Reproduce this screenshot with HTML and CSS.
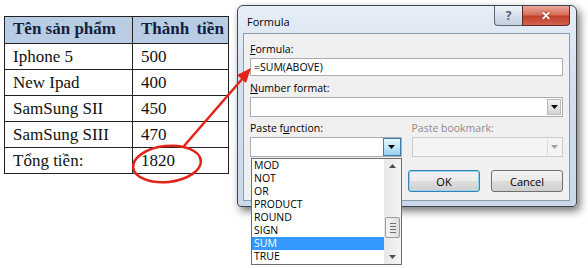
FILE: index.html
```html
<!DOCTYPE html>
<html lang="vi">
<head>
  <meta charset="UTF-8">
  <title>Formula</title>
  <link rel="stylesheet" href="styles.css">
</head>
<body>
  <div class="scene">
    <table class="price-table">
      <tr class="head">
        <th class="col-name">Tên sản phẩm</th>
        <th class="col-total">Thành tiền</th>
      </tr>
      <tr><td>Iphone 5</td><td>500</td></tr>
      <tr><td>New Ipad</td><td>400</td></tr>
      <tr><td>SamSung SII</td><td>450</td></tr>
      <tr><td>SamSung SIII</td><td>470</td></tr>
      <tr><td>Tổng tiền:</td><td>1820</td></tr>
    </table>

    <div class="dialog">
      <div class="titlebar">
        <span class="title">Formula</span>
        <div class="caption-btns">
          <span class="cap help">?</span>
          <span class="cap close">✕</span>
        </div>
      </div>

      <div class="client">
        <div class="label"><u>F</u>ormula:</div>
        <div class="textbox">=SUM(ABOVE)</div>

        <div class="label gap"><u>N</u>umber format:</div>
        <div class="combo">
          <span class="combo-btn">
            <svg width="7" height="4" viewBox="0 0 7 4"><polygon points="0,0 7,0 3.5,4" fill="#000"/></svg>
          </span>
        </div>

        <div class="paste-row">
          <div class="paste-col">
            <div class="label">Paste f<u>u</u>nction:</div>
            <div class="combo open">
              <span class="combo-btn">
                <svg width="7" height="4" viewBox="0 0 7 4"><polygon points="0,0 7,0 3.5,4" fill="#000"/></svg>
              </span>
            </div>
          </div>
          <div class="paste-col disabled">
            <div class="label">Paste bookmark:</div>
            <div class="combo">
              <span class="combo-btn">
                <svg width="7" height="4" viewBox="0 0 7 4"><polygon points="0,0 7,0 3.5,4" fill="#a0a0a0"/></svg>
              </span>
            </div>
          </div>
        </div>

        <div class="buttons">
          <div class="btn default">OK</div>
          <div class="btn">Cancel</div>
        </div>
      </div>
    </div>

    <!-- danh sách hàm đang mở -->
    <div class="fn-list">
      <div class="items">
        <div class="item">MOD</div>
        <div class="item">NOT</div>
        <div class="item">OR</div>
        <div class="item">PRODUCT</div>
        <div class="item">ROUND</div>
        <div class="item">SIGN</div>
        <div class="item selected">SUM</div>
        <div class="item">TRUE</div>
      </div>
      <div class="scrollbar">
        <svg class="sb-arrow" width="7" height="4" viewBox="0 0 7 4"><polygon points="0,4 7,4 3.5,0" fill="#4d4d4d"/></svg>
        <div class="sb-thumb"><span></span><span></span><span></span><span></span></div>
        <svg class="sb-arrow" width="7" height="4" viewBox="0 0 7 4"><polygon points="0,0 7,0 3.5,4" fill="#4d4d4d"/></svg>
      </div>
    </div>

    <svg class="annot" width="588" height="268" viewBox="0 0 588 268">
      <ellipse cx="167" cy="164" rx="34" ry="18" transform="rotate(-6 167 164)" fill="none" stroke="#e2231a" stroke-width="2.5"/>
      <line x1="184" y1="146" x2="243" y2="78" stroke="#e2231a" stroke-width="2.5"/>
      <polygon points="251,68 237,75 246,83" fill="#e2231a"/>
    </svg>
  </div>
</body>
</html>
```

FILE: styles.css
```css
body {
  margin: 0;
  background-color: white;
}
.scene {
  position: relative;
  width: 588px;
  height: 268px;
  display: flex;
  align-items: flex-start;
  overflow: hidden;
}

/* Bang gia */
.price-table {
  border-collapse: collapse;
  margin: 16px 0 0 4px;
  font-family: "Liberation Serif", "Times New Roman", serif;
  font-size: 17px;
  color: #111;
}
.price-table th,
.price-table td {
  border: 1px solid #222;
  padding: 0 0 0 8px;
  text-align: left;
  height: 25px;
}
.price-table th {
  background-color: #b8cce4;
  color: #14213d;
  height: 24px;
  padding-bottom: 2px;
}
.col-name {
  width: 119px;
}
.col-total {
  width: 87px;
  word-spacing: 3px;
}

/* Hop thoai Formula */
.dialog {
  margin: 5px 0 0 8px;
  width: 338px;
  border: 1px solid #3d4550;
  border-radius: 6px 6px 4px 4px;
  background: linear-gradient(#e6eef7, #d3dfed 40%, #cad8e9);
  box-shadow: 3px 4px 8px rgba(0, 0, 0, 0.55);
  font-family: "Open Sans", "Liberation Sans", sans-serif;
  font-size: 10.5px;
  color: #000;
}
.titlebar {
  height: 27px;
  display: flex;
  justify-content: space-between;
  align-items: flex-start;
}
.title {
  font-size: 11px;
  padding: 8px 0 0 9px;
}
.caption-btns {
  display: flex;
  margin-right: 6px;
}
.cap {
  height: 19px;
  display: flex;
  align-items: center;
  justify-content: center;
  border: 1px solid #5b6573;
  border-top: none;
}
.cap.help {
  width: 27px;
  border-radius: 0 0 0 4px;
  border-right: none;
  background: linear-gradient(#eef3f9, #d6dfea 50%, #c5d1df);
  color: #51627a;
  font-size: 12px;
  font-weight: bold;
}
.cap.close {
  width: 46px;
  border-color: #5b2a22;
  border-radius: 0 0 4px 0;
  background: linear-gradient(#e7a899, #d8705c 45%, #c1402c 55%, #d3644f);
  color: white;
  font-size: 12px;
  font-weight: bold;
  text-shadow: 0 0 2px #6a1a10;
}

.client {
  margin: 0 6px 5px 5px;
  border: 1px solid #8b9cb2;
  background-color: #f0f0f0;
  padding: 8px 6px 8px 6px;
}
.label {
  line-height: 14px;
  height: 14px;
}
.label.gap {
  margin-top: 5px;
}
.textbox {
  margin-top: 2px;
  height: 16px;
  line-height: 16px;
  border: 1px solid #abadb3;
  background-color: white;
  padding-left: 3px;
}
.combo {
  margin-top: 2px;
  height: 18px;
  border: 1px solid #abadb3;
  background-color: white;
  display: flex;
  justify-content: flex-end;
}
.combo-btn {
  width: 14px;
  margin: 1px;
  border: 1px solid #b8b8b8;
  background: linear-gradient(#f3f3f3, #e2e2e2 50%, #d4d4d4);
  display: flex;
  align-items: center;
  justify-content: center;
  box-sizing: border-box;
}
.combo.open .combo-btn {
  width: 18px;
  margin: 0;
  border-color: #3c7fb1;
  background: linear-gradient(#e5f5fd, #c4e5f6 50%, #98d1ef);
}
.paste-row {
  display: flex;
  gap: 10px;
  margin-top: 4px;
}
.paste-col {
  flex: 1;
}
.paste-col.disabled .label {
  color: #8d8d8d;
}
.paste-col.disabled .combo {
  border-color: #c9cbce;
  background-color: #f4f4f4;
}
.paste-col.disabled .combo-btn {
  border: none;
  border-left: 1px solid #dadada;
  background: none;
}
.buttons {
  display: flex;
  justify-content: flex-end;
  gap: 11px;
  margin-top: 13px;
}
.btn {
  width: 72px;
  height: 22px;
  box-sizing: border-box;
  border: 1px solid #707070;
  border-radius: 3px;
  background: linear-gradient(#f2f2f2, #ebebeb 50%, #dddddd 50%, #cfcfcf);
  display: flex;
  align-items: center;
  justify-content: center;
  font-size: 11px;
}
.btn.default {
  border-color: #3c7fb1;
  box-shadow: inset 0 0 0 1px #8fd6f6;
}

/* Danh sach ham */
.fn-list {
  position: absolute;
  left: 251px;
  top: 158px;
  width: 151px;
  height: 107px;
  box-sizing: border-box;
  border: 1px solid #6e6e6e;
  background-color: white;
  display: flex;
  font-family: "Open Sans", "Liberation Sans", sans-serif;
  font-size: 10.5px;
}
.items {
  flex: 1;
}
.item {
  height: 13px;
  line-height: 13px;
  padding-left: 2px;
}
.item.selected {
  background-color: #3399ff;
  color: white;
}
.scrollbar {
  width: 17px;
  background: linear-gradient(90deg, #e8e8e8, #f4f4f4);
  display: flex;
  flex-direction: column;
  align-items: center;
}
.sb-arrow {
  margin-top: 5px;
}
.sb-arrow:last-child {
  margin-top: auto;
  margin-bottom: 5px;
}
.sb-thumb {
  margin-top: 49px;
  width: 15px;
  height: 21px;
  box-sizing: border-box;
  border: 1px solid #9a9a9a;
  border-radius: 2px;
  background: linear-gradient(90deg, #f4f4f4, #dedede);
  display: flex;
  flex-direction: column;
  align-items: center;
  justify-content: center;
  gap: 2px;
}
.sb-thumb span {
  width: 6px;
  height: 1px;
  background-color: #6f6f6f;
}

.annot {
  position: absolute;
  left: 0;
  top: 0;
  pointer-events: none;
}
```
